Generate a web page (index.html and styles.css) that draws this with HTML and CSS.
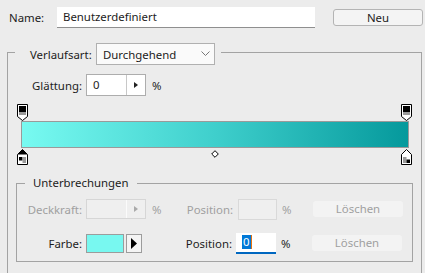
FILE: index.html
```html
<!DOCTYPE html>
<html>
<head>
  <title>Verlaufseditor</title>
  <link rel="stylesheet" href="styles.css">
</head>
<body>
  <div class="name_row">
    <span class="name_label">Name:</span>
    <div class="name_input">Benutzerdefiniert</div>
    <div class="btn">Neu</div>
  </div>

  <fieldset class="outer">
    <legend class="outer_legend">
      <span class="legend_label">Verlaufsart:</span>
      <div class="select">
        <span>Durchgehend</span>
        <svg class="chevron" width="9" height="6" viewBox="0 0 9 6"><path d="M0.5 0.5 L4.5 4.5 L8.5 0.5" fill="none" stroke="#777" stroke-width="1"/></svg>
      </div>
    </legend>

    <div class="row">
      <span class="label wide">Glättung:</span>
      <div class="spin">
        <span class="spin_value">0</span>
        <span class="spin_arrow"><svg width="4" height="6" viewBox="0 0 4 6"><path d="M0 0 L4 3 L0 6 Z" fill="#222"/></svg></span>
      </div>
      <span class="unit">%</span>
    </div>

    <!-- gradient bar with stops -->
    <div class="gradient">
      <svg class="stop top" style="left:-4px" width="11" height="17" viewBox="0 0 11 17">
        <path d="M0.5 0.5 H10.5 V12.5 L5.5 16.5 L0.5 12.5 Z" fill="#fff" stroke="#000"/>
        <rect x="2" y="2" width="7" height="6" fill="#000"/>
        <rect x="2" y="8" width="7" height="3" fill="#9a9a9a"/>
      </svg>
      <svg class="stop top" style="left:380px" width="11" height="17" viewBox="0 0 11 17">
        <path d="M0.5 0.5 H10.5 V12.5 L5.5 16.5 L0.5 12.5 Z" fill="#fff" stroke="#000"/>
        <rect x="2" y="2" width="7" height="6" fill="#000"/>
        <rect x="2" y="8" width="7" height="3" fill="#9a9a9a"/>
      </svg>
      <div class="bar"></div>
      <svg class="stop bottom" style="left:-4px" width="11" height="17" viewBox="0 0 11 17">
        <path d="M5.5 0.5 L10.5 5.5 V15.5 H0.5 V5.5 Z" fill="#fff" stroke="#000"/>
        <path d="M5.5 0.5 L10.5 5.5 H0.5 Z" fill="#000"/>
        <rect x="2" y="8" width="3.5" height="3.5" fill="#000"/>
        <rect x="5.5" y="8" width="3.5" height="6" fill="#9a9a9a"/>
      </svg>
      <svg class="stop bottom" style="left:380px" width="11" height="17" viewBox="0 0 11 17">
        <path d="M5.5 0.5 L10.5 5.5 V15.5 H0.5 V5.5 Z" fill="#fff" stroke="#000"/>
        <rect x="2" y="8" width="3.5" height="6" fill="#9a9a9a"/>
        <rect x="5.5" y="10.5" width="3.5" height="3.5" fill="#000"/>
      </svg>
      <svg class="midpoint" width="8" height="8" viewBox="0 0 8 8">
        <path d="M4 0.7 L7.3 4 L4 7.3 L0.7 4 Z" fill="#fff" stroke="#000"/>
      </svg>
    </div>

    <fieldset class="inner">
      <legend class="inner_legend">Unterbrechungen</legend>

      <div class="row">
        <span class="label disabled">Deckkraft:</span>
        <div class="spin off">
          <span class="spin_value"></span>
          <span class="spin_arrow"><svg width="4" height="6" viewBox="0 0 4 6"><path d="M0 0 L4 3 L0 6 Z" fill="#aaa"/></svg></span>
        </div>
        <span class="unit disabled">%</span>
        <span class="pos_label disabled">Position:</span>
        <div class="pos_input off"></div>
        <span class="unit2 disabled">%</span>
        <div class="btn_del">Löschen</div>
      </div>

      <div class="row">
        <span class="label">Farbe:</span>
        <div class="swatch"></div>
        <div class="swatch_arrow"><svg width="6" height="11" viewBox="0 0 6 11"><path d="M0 0 L6 5.5 L0 11 Z" fill="#000"/></svg></div>
        <span class="pos_label long">Position:</span>
        <div class="pos_input active"><span class="sel">0</span><span class="caret"></span></div>
        <span class="unit2">%</span>
        <div class="btn_del">Löschen</div>
      </div>
    </fieldset>
  </fieldset>
</body>
</html>
```

FILE: styles.css
```css
html {
    overflow: hidden;
  }
  body {
    margin: 0;
    background-color: #ececec;
    font-family: "Noto Sans", "Open Sans", sans-serif;
    font-size: 11.4px;
    color: #1c1c1c;
  }

  .name_row {
    display: flex;
    align-items: center;
    padding: 7px 0 0 9px;
    height: 21px;
  }
  .name_label {
    width: 48px;
  }
  .name_input {
    width: 252px;
    height: 20px;
    line-height: 20px;
    padding-left: 6px;
    background-color: #fff;
    border-bottom: 1px solid #8f8f8f;
  }
  .btn {
    margin-left: 18px;
    width: 88px;
    height: 15px;
    line-height: 15px;
    text-align: center;
    background-color: #f4f4f4;
    border: 1px solid #b4b4b4;
    border-radius: 3px;
  }

  .outer {
    margin: 11px 3px 0 7px;
    padding: 9px 0 12px 0;
    border: 1px solid #a3a3a3;
    min-inline-size: 0;
  }
  .outer_legend {
    display: flex;
    align-items: center;
    margin-left: 7px;
    padding: 4px 6px 0 15px;
  }
  .legend_label {
    width: 66px;
  }
  .select {
    width: 107px;
    height: 20px;
    padding: 0 4px 0 6px;
    display: flex;
    align-items: center;
    justify-content: space-between;
    background-color: #fafafa;
    border: 1px solid #b0b0b0;
  }

  .row {
    display: flex;
    align-items: center;
    height: 22px;
  }
  .label {
    width: 65px;
    text-align: right;
    margin-right: 4px;
  }
  .label.wide {
    width: 74px;
  }
  .disabled {
    color: #a0a0a0;
  }

  .spin {
    display: flex;
    width: 58px;
    height: 20px;
    background-color: #fff;
    border: 1px solid #adadad;
  }
  .spin_value {
    width: 33px;
    padding-left: 6px;
    line-height: 20px;
    border-right: 1px solid #c8c8c8;
  }
  .spin_arrow {
    flex: 1;
    display: flex;
    align-items: center;
    justify-content: center;
  }
  .spin.off {
    height: 18px;
    background-color: #efefef;
    border-color: #d6d6d6;
  }
  .spin.off .spin_value {
    border-right-color: #fbfbfb;
  }
  .unit {
    margin-left: 6px;
    width: 20px;
  }

  .gradient {
    position: relative;
    margin: 7px 12px 0 13px;
    padding: 18px 0 17px 0;
  }
  .bar {
    height: 25px;
    border: 1px solid #9a9a9a;
    background: linear-gradient(90deg, #78faf1 0%, #3fcfcc 50%, #05999c 100%);
  }
  .stop {
    position: absolute;
  }
  .stop.top {
    top: 1px;
  }
  .stop.bottom {
    top: 46px;
  }
  .midpoint {
    position: absolute;
    left: 190px;
    top: 47px;
  }

  .inner {
    margin: 10px 8px 0 8px;
    padding: 7px 0 7px 0;
    border: 1px solid #a3a3a3;
    min-inline-size: 0;
  }
  .inner_legend {
    margin-left: 8px;
    padding: 0 8px;
    line-height: 16px;
  }
  .inner .row + .row {
    margin-top: 12px;
  }

  .pos_label {
    width: 61px;
    text-align: right;
    margin-right: 5px;
  }
  .pos_label.long {
    width: 90px;
    margin-right: 4px;
  }
  .pos_input {
    width: 37px;
    height: 19px;
    background-color: #efefef;
    border: 1px solid #d9d9d9;
  }
  .pos_input.active {
    display: flex;
    align-items: center;
    width: 34px;
    height: 19px;
    padding-left: 6px;
    background-color: #fff;
    border: none;
    border-bottom: 2px solid #0067c0;
  }
  .sel {
    background-color: #0078d7;
    color: #fff;
    line-height: 14px;
    padding: 0 1px;
  }
  .caret {
    width: 1px;
    height: 14px;
    background-color: #e8730e;
  }
  .unit2 {
    margin-left: 5px;
    width: 31px;
  }
  .pos_input.off + .unit2 {
    width: 31px;
  }
  .btn_del {
    width: 90px;
    height: 16px;
    line-height: 16px;
    text-align: center;
    color: #a0a0a0;
    background-color: #f3f3f3;
    border-radius: 3px;
  }

  .swatch {
    width: 36px;
    height: 17px;
    background-color: #78f8f0;
    border: 1px solid #9c9c9c;
  }
  .swatch_arrow {
    margin-left: 2px;
    width: 14px;
    height: 17px;
    display: flex;
    align-items: center;
    justify-content: center;
    background-color: #f4f4f4;
    border: 1px solid #9c9c9c;
  }
```
